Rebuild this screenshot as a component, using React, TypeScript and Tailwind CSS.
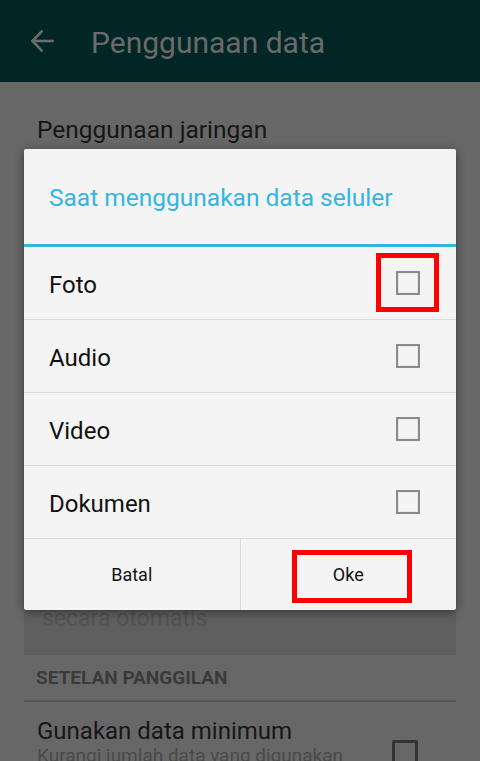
import { useState } from 'react';

const OPTIONS = ['Foto', 'Audio', 'Video', 'Dokumen'];

function BackArrow() {
  return (
    <svg width="24" height="24" viewBox="0 0 24 24" fill="none" stroke="#6b6b6b" strokeWidth="2.6" strokeLinecap="square">
      <path d="M22.5 12H3" />
      <path d="M11.5 2.5L2.5 12l9 9.5" />
    </svg>
  );
}

function Checkbox({ dark }: { dark?: boolean }) {
  return (
    <span
      className={
        dark
          ? 'block h-[26px] w-[26px] rounded-[2px] border-[3px] border-[#333]'
          : 'block h-[24px] w-[24px] border-2 border-[#8a8a8a] shadow-[inset_0_0_0_1px_#e8e8e8]'
      }
    />
  );
}

function OptionRow({ label, marked }: { label: string; marked: boolean }) {
  const [checked, setChecked] = useState(false);
  return (
    <div
      onClick={() => setChecked((c) => !c)}
      className="relative flex h-[73px] items-center justify-between border-b border-[#dcdcdc] pl-[25px] pr-[36px]"
    >
      <span className="pt-[3px] text-[24px] text-[#111]">{label}</span>
      <Checkbox />
      {checked && <span className="absolute right-[40px] top-[28px] text-[#33b5e5]">✓</span>}
      {marked && (
        <span className="absolute right-[17px] top-[6px] h-[59px] w-[63px] border-[5px] border-[#ff0000]" />
      )}
    </div>
  );
}

export default function App() {
  return (
    <div
      className="relative h-[761px] w-[480px] overflow-hidden bg-[#676767]"
      style={{ fontFamily: 'Roboto, "Noto Sans", sans-serif' }}
    >
      {/* dimmed settings page */}
      <header className="flex h-[82px] items-center bg-[#022625]">
        <span className="ml-[30px] flex">
          <BackArrow />
        </span>
        <h1 className="ml-[37px] pt-[2px] text-[30px] text-[#6a6a6a]">Penggunaan data</h1>
      </header>

      <div className="mx-[24px]">
        <div className="h-[78px] pl-[13px] pt-[34px] text-[24.5px] leading-[28px] text-[#161616]">
          Penggunaan jaringan
        </div>
        <div className="h-[380px]" />
        <div className="flex h-[115px] items-end bg-[#5f5f5f] pb-[22px] pl-[18px] text-[23px] leading-[28px] text-[#525252]">
          secara otomatis
        </div>
        <div className="flex h-[47px] items-end border-b-2 border-[#555] pb-[11px] pl-[12px] text-[19px] font-bold leading-[22px] text-[#3a3a3a]">
          SETELAN PANGGILAN
        </div>
        <div className="flex items-start justify-between pl-[13px] pr-[38px] pt-[15px]">
          <div>
            <div className="text-[24px] leading-[28px] text-[#161616]">Gunakan data minimum</div>
            <div className="text-[19px] leading-[22px] text-[#4a4a4a]">Kurangi jumlah data yang digunakan</div>
          </div>
          <span className="mt-[23px]">
            <Checkbox dark />
          </span>
        </div>
      </div>

      {/* dialog */}
      <div className="absolute left-[24px] top-[149px] w-[432px] rounded-[2px] bg-[#f4f4f4] shadow-[0_2px_10px_rgba(0,0,0,0.45)]">
        <div className="flex h-[95px] items-center pl-[25px] pt-[3px] text-[24.5px] text-[#33b5e5]">
          Saat menggunakan data seluler
        </div>
        <div className="h-[3px] bg-[#33b5e5]" />
        {OPTIONS.map((o, i) => (
          <OptionRow key={o} label={o} marked={i === 0} />
        ))}
        <div className="flex h-[71px]">
          <button className="flex flex-1 items-center justify-center border-r border-[#dcdcdc] text-[18px] text-[#111]">
            Batal
          </button>
          <button className="relative flex flex-1 items-center justify-center text-[18px] text-[#111]">
            Oke
            <span className="absolute left-[51px] top-[11px] h-[53px] w-[120px] border-[5px] border-[#ff0000]" />
          </button>
        </div>
      </div>
    </div>
  );
}
